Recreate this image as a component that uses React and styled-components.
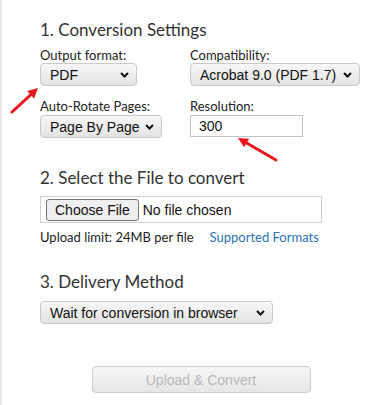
import React from 'react';
import styled, { createGlobalStyle } from 'styled-components';

const GlobalStyle = createGlobalStyle`
  html, body {
    margin: 0;
    padding: 0;
    background: #ffffff;
  }
`;

const Frame = styled.div`
  position: relative;
  width: 381px;
  height: 405px;
  overflow: hidden;
`;

const Page = styled.div`
  box-sizing: border-box;
  height: 100%;
  width: 363px;
  border-left: 2px solid #e6e6e6;
  padding: 19px 0 0 38px;
  display: flex;
  flex-direction: column;
  align-items: flex-start;
  font-family: Lato, "Open Sans", sans-serif;
  color: #222;
`;

const Heading = styled.h2`
  margin: ${(p) => p.$top || 0}px 0 0;
  font-size: 17px;
  line-height: 22px;
  font-weight: 400;
  color: #333;
`;

const FieldGrid = styled.div`
  margin-top: 6px;
  display: grid;
  grid-template-columns: 150px auto;
  row-gap: 12px;
`;

const Field = styled.div`
  display: flex;
  flex-direction: column;
  align-items: flex-start;
`;

const Label = styled.label`
  font-size: 13px;
  line-height: 16px;
`;

const SelectWrap = styled.div`
  position: relative;
  display: inline-flex;
  align-self: flex-start;
  margin-top: ${(p) => p.$top || 0}px;
`;

const Select = styled.select`
  appearance: none;
  box-sizing: border-box;
  height: 23px;
  width: ${(p) => p.$w}px;
  padding: 0 18px 0 9px;
  border: 1px solid #c9c9c9;
  border-radius: 4px;
  background: linear-gradient(#f7f7f7, #e3e3e3);
  font-family: "Liberation Sans", Arial, sans-serif;
  font-size: 14px;
  color: #111;
  outline: none;
`;

const Chevron = styled.svg`
  position: absolute;
  right: 8px;
  top: 9px;
  pointer-events: none;
`;

const TextInput = styled.input`
  box-sizing: border-box;
  width: 113px;
  height: 22px;
  padding: 0 0 0 8px;
  border: 1px solid #c4c4c4;
  border-radius: 0;
  font-family: "Liberation Sans", Arial, sans-serif;
  font-size: 14px;
  color: #111;
  outline: none;
`;

const FileBox = styled.label`
  margin-top: 7px;
  box-sizing: border-box;
  width: 282px;
  height: 27px;
  border: 1px solid #cfcfcf;
  display: flex;
  align-items: center;
  padding-left: 5px;
  gap: 4px;
  font-family: "Liberation Sans", Arial, sans-serif;
  font-size: 14px;
  color: #111;

  input {
    display: none;
  }
`;

const FileButton = styled.span`
  box-sizing: border-box;
  height: 22px;
  padding: 0 8px;
  display: inline-flex;
  align-items: center;
  background: #efefef;
  border: 1px solid #767676;
  border-radius: 3px;
`;

const Note = styled.div`
  margin-top: 6px;
  display: flex;
  gap: 16px;
  font-size: 13px;
  line-height: 16px;
`;

const Link = styled.a`
  color: #2a72b5;
  text-decoration: none;
`;

const SubmitRow = styled.div`
  margin-top: 42px;
  width: 322px;
  display: flex;
  justify-content: center;
`;

const SubmitButton = styled.button`
  width: 219px;
  height: 27px;
  border: 1px solid #cccccc;
  border-radius: 4px;
  background: linear-gradient(#f6f6f6, #e6e6e6);
  font-family: "Liberation Sans", Arial, sans-serif;
  font-size: 14px;
  color: #b9b9b9;
`;

const Overlay = styled.svg`
  position: absolute;
  left: 0;
  top: 0;
  pointer-events: none;
`;

const Dropdown = ({ width, top, children }) => (
  <SelectWrap $top={top}>
    <Select $w={width}>{children}</Select>
    <Chevron width="9" height="6" viewBox="0 0 9 6">
      <path d="M1 1l3.5 3.5L8 1" fill="none" stroke="#111" strokeWidth="2" />
    </Chevron>
  </SelectWrap>
);

const Arrow = ({ x1, y1, x2, y2 }) => {
  const a = Math.atan2(y2 - y1, x2 - x1);
  const len = 10;
  const wid = 5;
  const bx = x2 - len * Math.cos(a);
  const by = y2 - len * Math.sin(a);
  const px = -Math.sin(a) * wid;
  const py = Math.cos(a) * wid;
  return (
    <g fill="#e8161c" stroke="#e8161c">
      <line x1={x1} y1={y1} x2={bx} y2={by} strokeWidth="3" strokeLinecap="round" />
      <polygon points={`${x2},${y2} ${bx + px},${by + py} ${bx - px},${by - py}`} stroke="none" />
    </g>
  );
};

export default function App() {
  return (
    <Frame>
      <GlobalStyle />
      <Page>
        <Heading>1. Conversion Settings</Heading>
        <FieldGrid>
          <Field>
            <Label>Output format:</Label>
            <Dropdown width={97}>
              <option>PDF</option>
            </Dropdown>
          </Field>
          <Field>
            <Label>Compatibility:</Label>
            <Dropdown width={170}>
              <option>Acrobat 9.0 (PDF 1.7)</option>
            </Dropdown>
          </Field>
          <Field>
            <Label>Auto-Rotate Pages:</Label>
            <Dropdown width={122} top={1}>
              <option>Page By Page</option>
            </Dropdown>
          </Field>
          <Field>
            <Label>Resolution:</Label>
            <SelectWrap $top={1}>
              <TextInput defaultValue="300" />
            </SelectWrap>
          </Field>
        </FieldGrid>

        <Heading $top={29}>2. Select the File to convert</Heading>
        <FileBox>
          <input type="file" />
          <FileButton>Choose File</FileButton>
          <span>No file chosen</span>
        </FileBox>
        <Note>
          <span>Upload limit: 24MB per file</span>
          <Link href="#formats">Supported Formats</Link>
        </Note>

        <Heading $top={26}>3. Delivery Method</Heading>
        <Dropdown width={233} top={8}>
          <option>Wait for conversion in browser</option>
        </Dropdown>

        <SubmitRow>
          <SubmitButton disabled>Upload &amp; Convert</SubmitButton>
        </SubmitRow>
      </Page>
      <Overlay width="381" height="405" viewBox="0 0 381 405">
        <Arrow x1={12} y1={112} x2={38} y2={88} />
        <Arrow x1={276} y1={160} x2={238} y2={138} />
      </Overlay>
    </Frame>
  );
}
